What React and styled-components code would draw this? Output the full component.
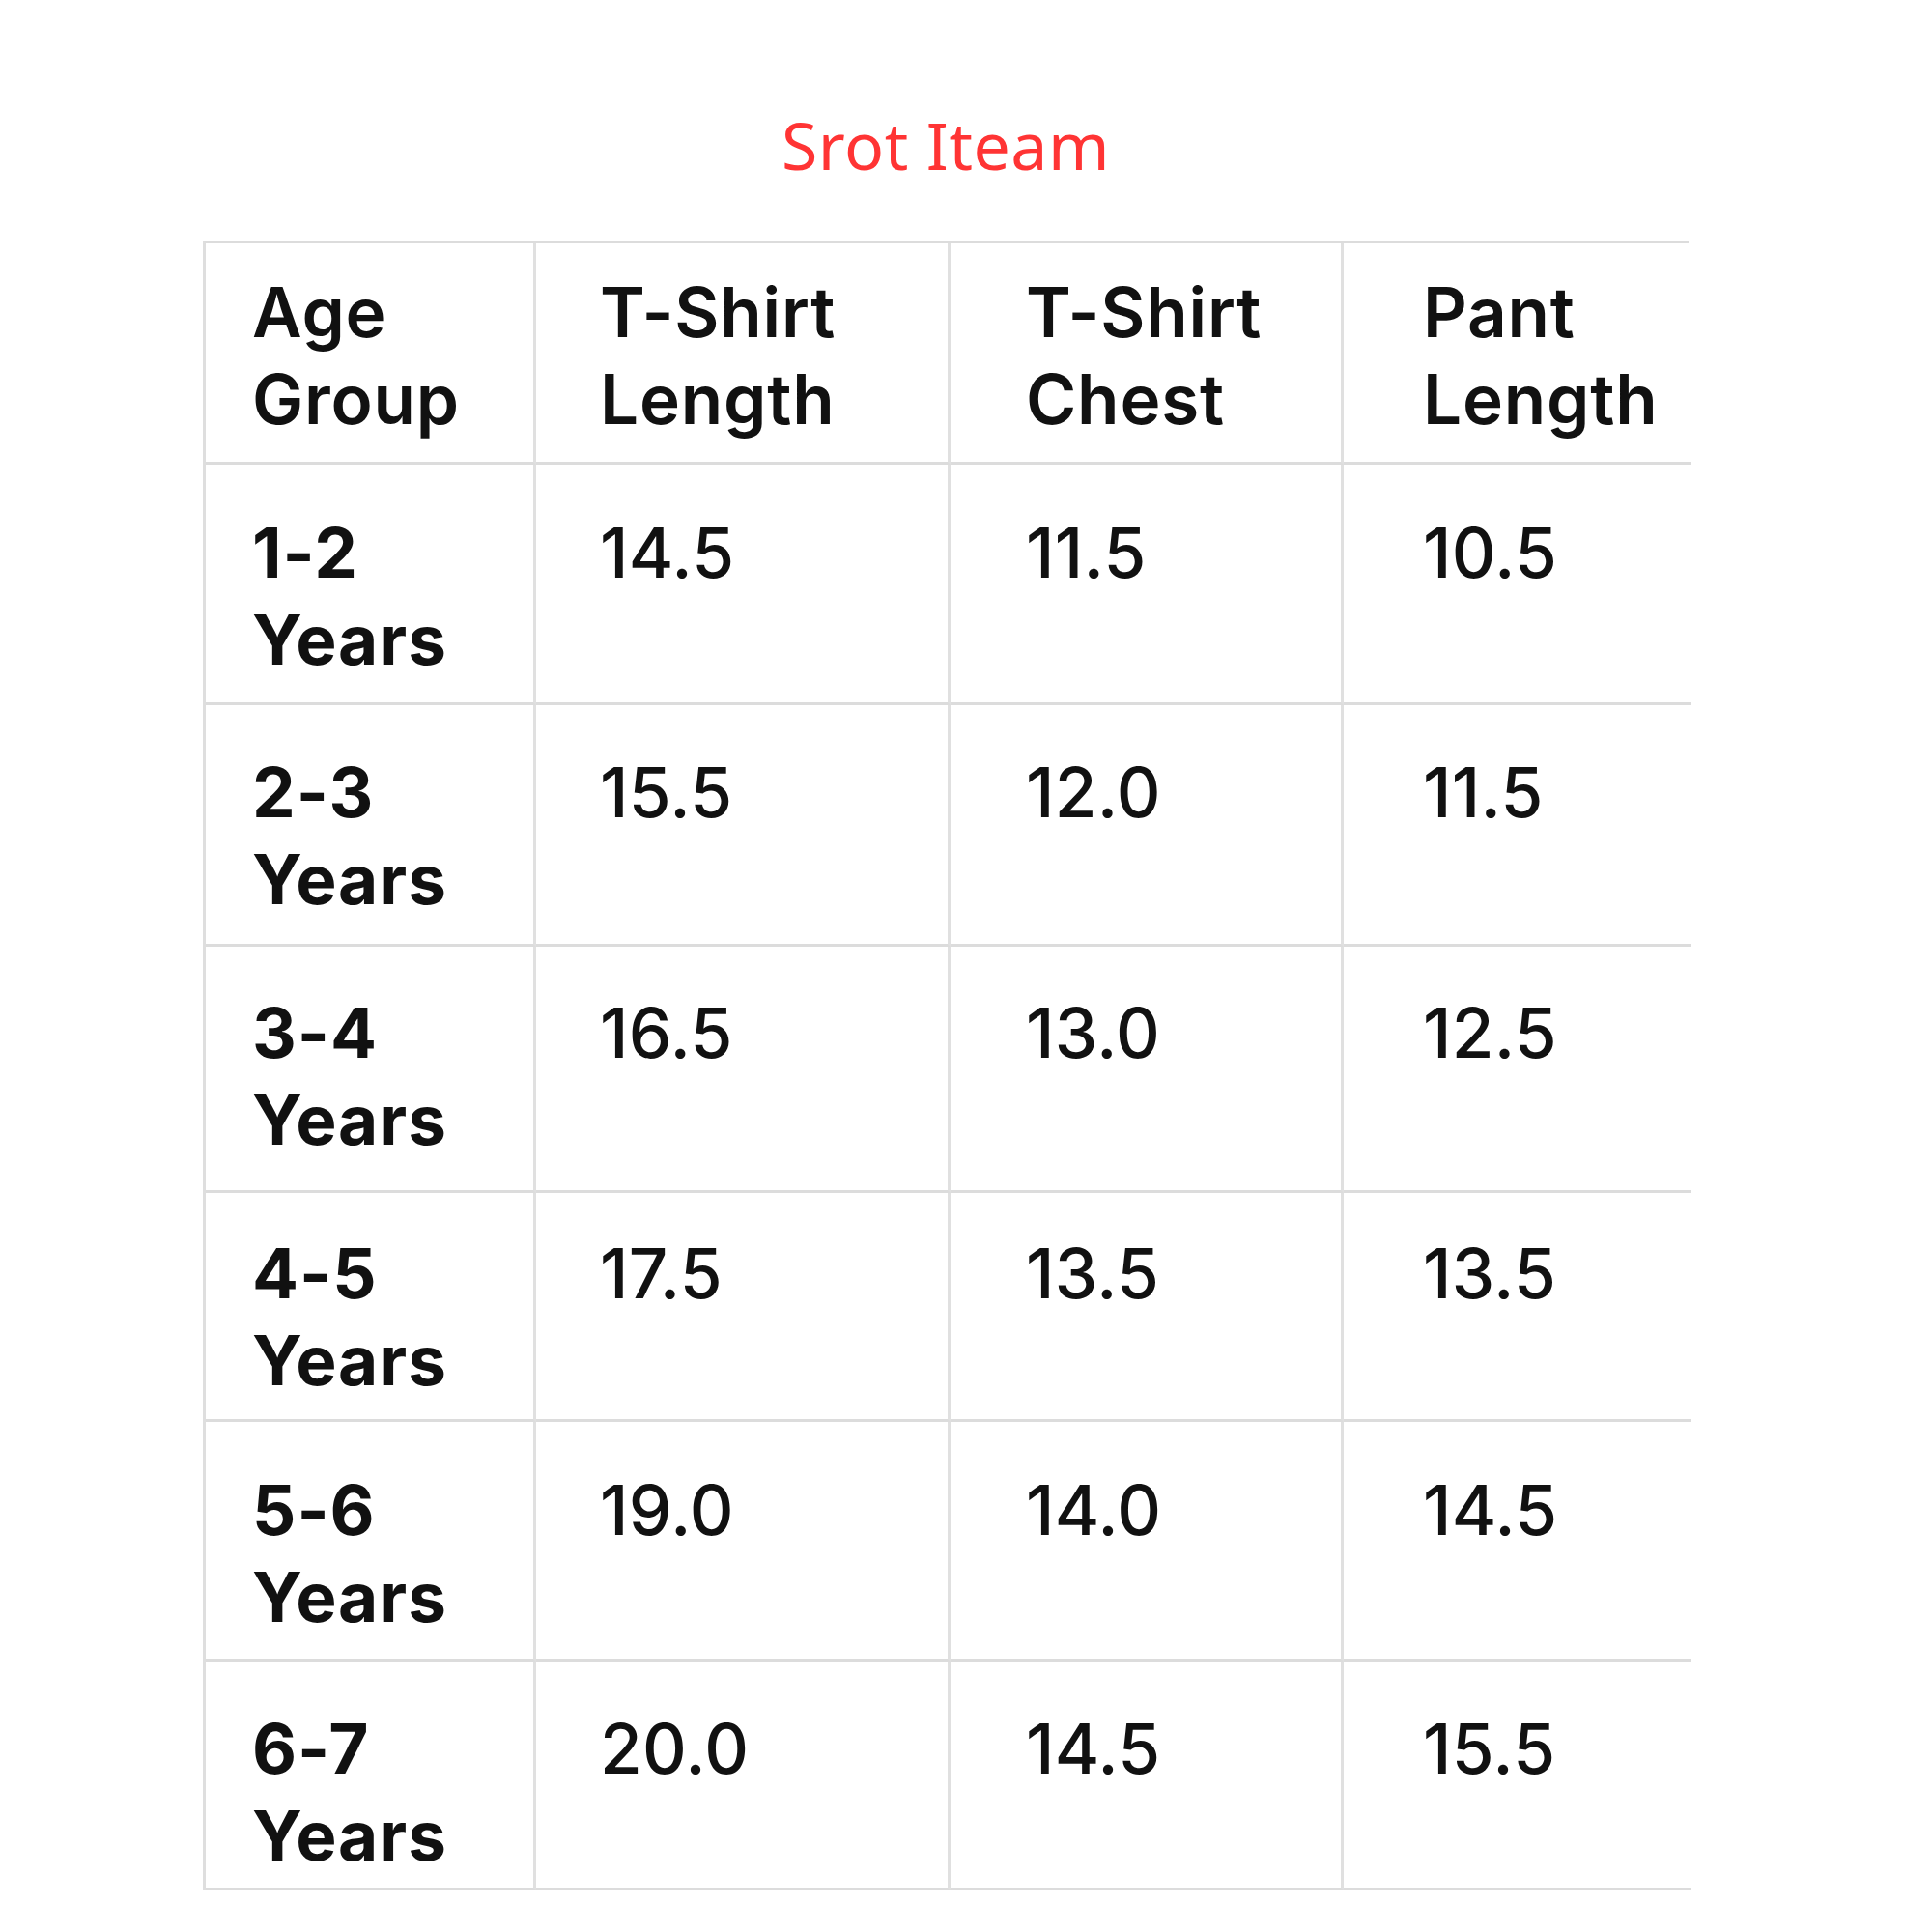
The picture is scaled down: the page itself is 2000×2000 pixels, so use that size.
import React from "react";
import styled, { createGlobalStyle } from "styled-components";

const Global = createGlobalStyle`
  html, body { margin: 0; padding: 0; background: #ffffff; }
  body { font-family: "Inter", "Liberation Sans", sans-serif; }
`;

const Page = styled.div`
  width: 2000px;
  min-height: 2000px;
  box-sizing: border-box;
  padding: 116px 0 0 210px;
`;

const Column = styled.div`
  width: 1538px;
  display: flex;
  flex-direction: column;
  align-items: center;
`;

const Title = styled.h1`
  margin: 0 0 65px 0;
  font-family: "Noto Sans", sans-serif;
  font-weight: 400;
  font-size: 68px;
  line-height: 68px;
  color: #ff3434;
  letter-spacing: 0.5px;
`;

const Table = styled.div`
  align-self: stretch;
  display: grid;
  grid-template-columns: 342px 429px 407px 360px;
  grid-template-rows: 229px 249px 250px 255px 237px 248px 237px;
  border-top: 3px solid #dcdcdc;
  border-left: 3px solid #dedede;
  box-sizing: border-box;
`;

const Cell = styled.div`
  box-sizing: border-box;
  border-bottom: 3px solid #dcdcdc;
  border-right: ${(p) => (p.$last ? "none" : "3px solid #e0e0e0")};
  padding-left: ${(p) => p.$padLeft}px;
  padding-top: ${(p) => p.$padTop}px;
  font-size: 71px;
  line-height: 90px;
  color: #111111;
  font-weight: ${(p) => (p.$bold ? 700 : p.$head ? 560 : 460)};
  letter-spacing: ${(p) => (p.$bold ? "1px" : p.$head ? "0.8px" : "0.3px")};
  white-space: pre-line;
`;

const padLefts = [48, 66, 78, 82];

const header = ["Age\nGroup", "T-Shirt\nLength", "T-Shirt\nChest", "Pant\nLength"];

const rows = [
  { age: "1-2\nYears", vals: ["14.5", "11.5", "10.5"], pad: 46 },
  { age: "2-3\nYears", vals: ["15.5", "12.0", "11.5"], pad: 45 },
  { age: "3-4\nYears", vals: ["16.5", "13.0", "12.5"], pad: 44 },
  { age: "4-5\nYears", vals: ["17.5", "13.5", "13.5"], pad: 38 },
  { age: "5-6\nYears", vals: ["19.0", "14.0", "14.5"], pad: 46 },
  { age: "6-7\nYears", vals: ["20.0", "14.5", "15.5"], pad: 45 },
];

export default function App() {
  return (
    <>
      <Global />
      <Page>
        <Column>
          <Title>Srot Iteam</Title>
          <Table>
            {header.map((h, i) => (
              <Cell key={"h" + i} $head $padLeft={padLefts[i]} $padTop={26} $last={i === 3}>
                {h}
              </Cell>
            ))}
            {rows.map((r, ri) => (
              <React.Fragment key={ri}>
                <Cell $bold $padLeft={padLefts[0]} $padTop={r.pad}>
                  {r.age}
                </Cell>
                {r.vals.map((v, vi) => (
                  <Cell key={vi} $padLeft={padLefts[vi + 1]} $padTop={r.pad} $last={vi === 2}>
                    {v}
                  </Cell>
                ))}
              </React.Fragment>
            ))}
          </Table>
        </Column>
      </Page>
    </>
  );
}
